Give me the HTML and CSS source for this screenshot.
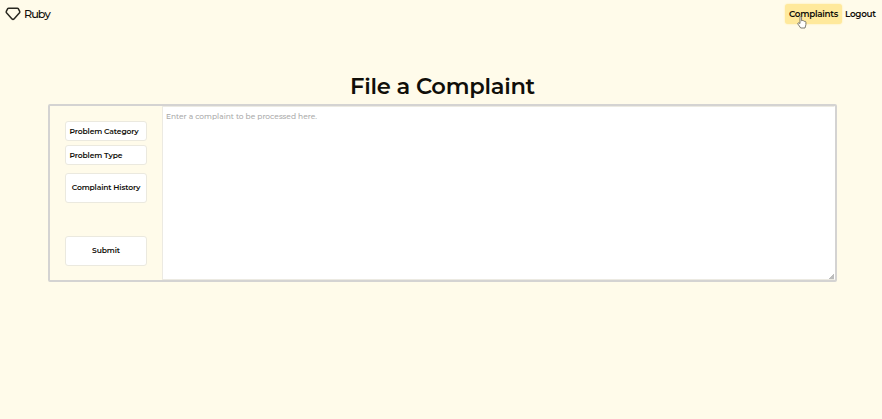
FILE: index.html
```html
<!DOCTYPE html>
<html lang="en">
<head>
<meta charset="utf-8">
<title>Ruby</title>
<link rel="stylesheet" href="styles.css">
</head>
<body>
<header class="navbar">
  <a class="brand"><svg class="gem" viewBox="0 0 16 14"><path d="M3.7 1.2h8.6c.5 0 .8.2 1.1.6l1.3 2.5c.3.6.2 1-.2 1.500L9 11.900c-.7.7-1.300.7-2 0L1.500 5.800c-.4-.5-.5-.9-.2-1.500l1.300-2.500c.3-.4.6-.6 1.100-.6Z"/></svg><span>Ruby</span></a>
  <nav class="links">
    <a class="link active"><span>Complaints</span>
      <svg class="cursor" viewBox="0 0 10 13"><path d="M3 7.500V1.600c0-1.300 1.600-1.300 1.600 0v3.200c.4-.5 1.300-.4 1.500.2.500-.4 1.200-.2 1.400.4.600-.3 1.400 0 1.400.8v2.500L8 12H3.700L1 8.200c-.7-1 .4-1.800 1.200-1.100Z"/></svg>
    </a>
    <a class="link logout"><span>Logout</span></a>
  </nav>
</header>
<main class="page">
  <h1><span>File a Complaint</span></h1>
  <form class="panel">
    <div class="sidebar">
      <button type="button" class="select category"><span>Problem Category</span></button>
      <button type="button" class="select type"><span>Problem Type</span></button>
      <button type="button" class="history"><span>Complaint History</span></button>
      <button type="button" class="submit"><span>Submit</span></button>
    </div>
    <textarea placeholder="Enter a complaint to be processed here."></textarea>
  </form>
</main>
</body>
</html>
```
FILE: styles.css
```css
* { box-sizing: border-box; }
body {
  margin: 0;
  height: 419px;
  overflow: hidden;
  background: #fffbea;
  color: #100e09;
  font-family: Montserrat, Inter, "Liberation Sans", sans-serif;
}
.navbar {
  height: 28px;
  padding: 0 1px 0 5px;
  display: flex;
  align-items: center;
  justify-content: space-between;
}
.brand { display: flex; align-items: center; gap: 3px; font-size: 11.3px; font-weight: 500; letter-spacing: -1px; }
.gem { width: 16px; height: 14px; fill: none; stroke: #292820; stroke-width: 1.5; }
.links { display: flex; }
.link {
  position: relative;
  height: 20px;
  padding: 0 4px;
  display: flex;
  align-items: center;
  border-radius: 3px;
  font-size: 8.8px;
  font-weight: 600;
  letter-spacing: -.28px;
}
.link > span { position: relative; top: -.5px; }
.active { width: 57px; background: #ffe99c; box-shadow: 0 0 2px #ffe99c; }
.logout { width: 39px; padding: 0 0 0 3px; }
.cursor {
  position: absolute;
  left: 12px;
  top: 11.5px;
  width: 10px;
  height: 13px;
  fill: #fff;
  stroke: #5c5a52;
  stroke-width: .8;
}
.page { padding: 43px 45px 0 48px; }
h1 {
  margin: 0;
  height: 33px;
  line-height: 30px;
  text-align: center;
  font-size: 22.6px;
  font-weight: 600;
  letter-spacing: -.27px;
}
.panel {
  display: flex;
  height: 178px;
  border: 2px solid #d4d3d2;
  border-radius: 2px;
}
.sidebar {
  width: 112px;
  padding: 15px 15px 0;
  display: flex;
  flex-direction: column;
}
button {
  width: 82px;
  padding: 0 0 1px;
  border: 1px solid #ebe9df;
  border-radius: 3px;
  background: #fff;
  color: #100e09;
  font: 600 7.6px Montserrat, Inter, "Liberation Sans", sans-serif;
  letter-spacing: -.13px;
  white-space: nowrap;
}
.select { height: 20px; padding: 0 0 0 3.5px; text-align: left; }
.type { margin-top: 4px; }
.history { height: 30px; margin-top: 8px; }
.submit { height: 30px; margin-top: 33px; }
textarea {
  flex: 1;
  padding: 5px 3px 4px;
  border: 1px solid #eceae2;
  border-right-color: #fff;
  outline: 0;
  background: #fff;
  font: 500 7.48px/10px Montserrat, Inter, "Liberation Sans", sans-serif;
  resize: both;
}
textarea::placeholder { color: #aaa; }
textarea::-webkit-resizer {
  background: linear-gradient(135deg, transparent 83%, #bdbdbd 83%);
}
```
